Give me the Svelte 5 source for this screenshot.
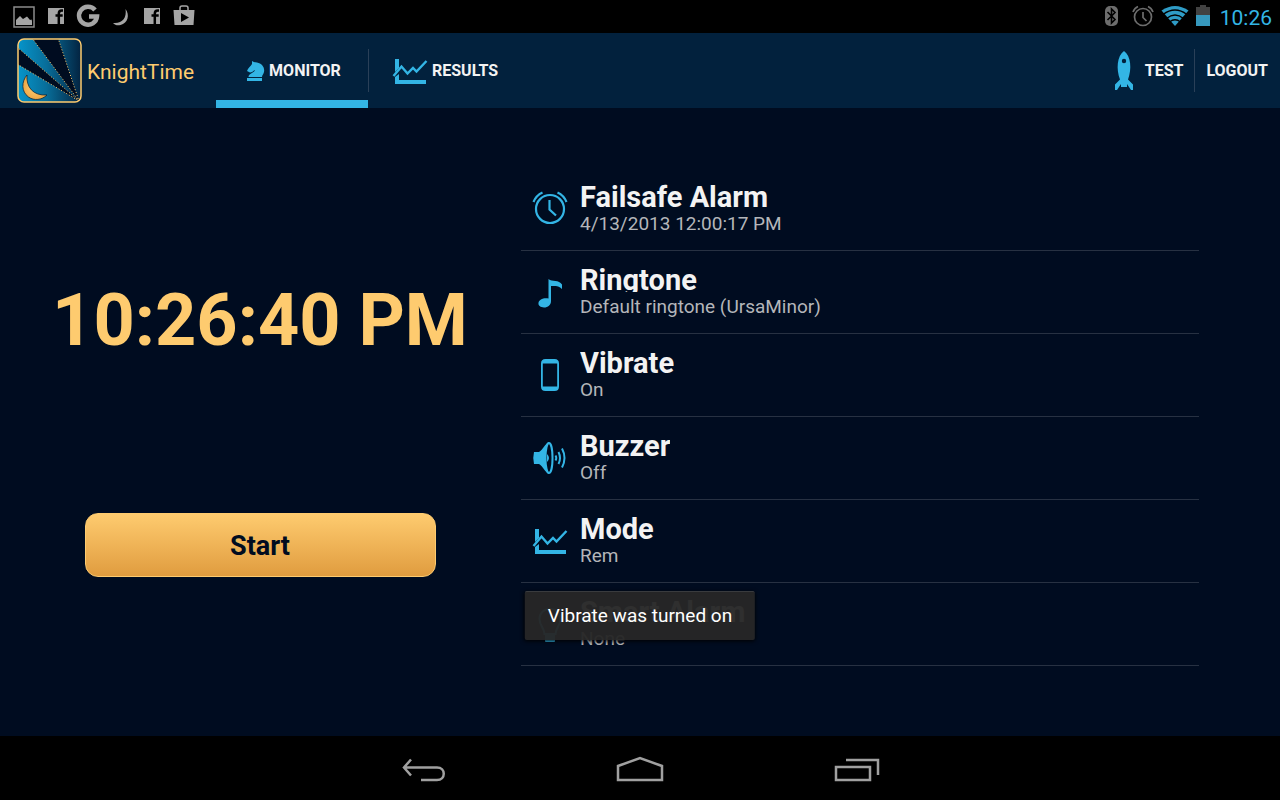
<script lang="ts">
  type Setting = { icon: string; title: string; value: string };

  const settings: Setting[] = [
    { icon: 'alarm', title: 'Failsafe Alarm', value: '4/13/2013 12:00:17 PM' },
    { icon: 'note', title: 'Ringtone', value: 'Default ringtone (UrsaMinor)' },
    { icon: 'phone', title: 'Vibrate', value: 'On' },
    { icon: 'speaker', title: 'Buzzer', value: 'Off' },
    { icon: 'chart', title: 'Mode', value: 'Rem' },
    { icon: 'bulb', title: 'Smart Alarm', value: 'None' }
  ];
</script>

{#snippet chart()}
  <svg width="36" height="28" viewBox="0 0 36 28" aria-hidden="true">
    <path d="M3 2h4v9l-4 4zM3 20l4-3v6h27v4H3z" fill="#33b5e5" />
    <path d="M1.500 19L9.500 9.500l6 7L21 11l3.500 3.500L34.500 4" fill="none" stroke="#33b5e5" stroke-width="2.400" />
  </svg>
{/snippet}

{#snippet facebook()}
  <svg width="32" height="32" viewBox="0 0 32 32" aria-hidden="true">
    <path d="M8 8h16v16H8z" fill="#a5a5a5" />
    <path d="M18.800 24V13.500q0-3 3-3h1.200M15.500 15.600h7.200" fill="none" stroke="#000" stroke-width="2.500" />
  </svg>
{/snippet}

{#snippet rowIcon(name: string)}
  {#if name === 'chart'}
    {@render chart()}
  {:else}
    <svg width="36" height="36" viewBox="0 0 36 36" fill="none" stroke="#33b5e5" aria-hidden="true">
      {#if name === 'alarm'}
        <circle cx="18" cy="18" r="14" stroke-width="2.200" />
        <path d="M17.500 9v9.500l6.500 6" stroke-width="2.200" />
        <path d="M1.500 11Q4 4.500 10.500 1.500M34.500 11Q32 4.500 25.500 1.500" stroke-width="2.200" />
      {:else if name === 'note'}
        <path d="M16.500 5c3.500 3 10.500.5 13.500 5.500v4.500c-3-3.500-7-3-11-3v15c0 4-3 6.500-7 6.500-3.500 0-6-2-5.500-4.700.5-3.200 5-5.300 10-4.300z" fill="#33b5e5" stroke="none" />
      {:else if name === 'phone'}
        <path fill-rule="evenodd" d="M13.500 2h9q4.500 0 4.500 4.500v23q0 4.500-4.500 4.500h-9q-4.500 0-4.500-4.500v-23Q9 2 13.500 2zM10.800 6.500v23h14.400v-23z" fill="#33b5e5" stroke="none" />
      {:else if name === 'speaker'}
        <path d="M2 12h5c4-2 6-8.500 10-10v32c-4-1.500-6-8-10-10H2q-1.500-6 0-12z" fill="#33b5e5" stroke="none" />
        <ellipse cx="17" cy="18" rx="3.500" ry="15" fill="#000c20" stroke-width="2" />
        <path d="M15 14q4 4 0 8z" fill="#33b5e5" stroke="none" />
        <path d="M23.500 15.500q1.500 2.500 0 5M26.500 12q3 6 0 12M30 8.500q5 9.500 0 19" stroke-width="2" />
      {:else}
        <path d="M12.500 28c0-6-5-8-5-15 0-6 4.500-10 10.500-10s10.500 4 10.500 10c0 7-5 9-5 15z" stroke-width="2" />
        <path d="M13 29h10v6.500q-5 3-10 0z" fill="#33b5e5" stroke="none" />
      {/if}
    </svg>
  {/if}
{/snippet}

<div class="screen">
  <div class="status">
    <div class="notices">
      <svg width="32" height="32" viewBox="0 0 32 32" aria-hidden="true">
        <path d="M6 7h20v20H6z" fill="none" stroke="#8c8c8c" stroke-width="1.500" />
        <path d="M8 25v-5l4-4 3 3 4-2.500 3 3.500 1.500-.5L24 21v4z" fill="#a5a5a5" />
      </svg>
      {@render facebook()}
      <svg width="32" height="32" viewBox="0 0 32 32" aria-hidden="true">
        <path d="M23 10A9 9 0 1 0 25 16.500H17" fill="none" stroke="#a5a5a5" stroke-width="4.500" />
      </svg>
      <svg width="32" height="32" viewBox="0 0 32 32" aria-hidden="true">
        <path d="M21.500 9c4.500 6 2.500 14-5 16-3 .7-5.500.2-7.500-2 9 1 14-5 12.500-14z" fill="#a5a5a5" />
      </svg>
      {@render facebook()}
      <svg width="32" height="32" viewBox="0 0 32 32" aria-hidden="true">
        <path d="M12 11V8q0-2 2-2h4q2 0 2 2v3" fill="none" stroke="#a5a5a5" stroke-width="1.500" />
        <path fill-rule="evenodd" d="M5.500 10h21L25.500 25h-19zM13 13v9l8-4.500z" fill="#a5a5a5" />
      </svg>
    </div>
    <div class="indicators">
      <svg width="32" height="32" viewBox="0 0 32 32" aria-hidden="true">
        <rect x="9" y="6" width="13" height="20" rx="5" fill="#6d6d6d" />
        <path d="M11.500 12l7.500 7.500L15.500 23V9l3.500 3.500L11.500 20" fill="none" stroke="#000" stroke-width="1.600" />
      </svg>
      <svg width="32" height="32" viewBox="0 0 32 32" fill="none" stroke="#6d6d6d" stroke-width="1.700" aria-hidden="true">
        <circle cx="15" cy="17" r="8.500" />
        <path d="M15 12v5.500l3.500 3.500M5 12q1.500-4 5-5.500M25 12q-1.500-4-5-5.500" />
      </svg>
      <svg width="32" height="32" viewBox="0 0 32 32" aria-hidden="true">
        <path d="M1.500 10.500Q15 1.500 28.500 10.500L15 26z" fill="#2f9cc6" />
        <path d="M3 14.500Q15 5.500 27 14.500M6.500 18.500Q15 11.500 23.500 18.500M9.500 22Q15 17.500 20.500 22" fill="none" stroke="#000" stroke-width="1.300" />
      </svg>
      <svg width="24" height="32" viewBox="0 0 24 32" aria-hidden="true">
        <path d="M4 7h4V5h6v2h4v8H4z" fill="#424242" />
        <path d="M4 15h14v11H4z" fill="#3698bd" />
      </svg>
      <time class="small-clock">10:26</time>
    </div>
  </div>

  <header>
    <div class="brand">
      <svg width="65" height="65" viewBox="0 0 65 65" aria-hidden="true">
        <defs>
          <linearGradient id="sky"><stop offset="0" stop-color="#0696cc" /><stop offset=".45" stop-color="#086e9a" /><stop offset="1" stop-color="#03213e" /></linearGradient>
          <radialGradient id="gold"><stop offset="0" stop-color="#ffcf78" /><stop offset="1" stop-color="#eda846" /></radialGradient>
          <clipPath id="tile"><rect x="1" y="1" width="63" height="63" rx="6" /></clipPath>
        </defs>
        <g clip-path="url(#tile)">
          <path d="M0 0h65v65H0z" fill="url(#sky)" />
          <path d="M15 0h26l21 63zM0 9l62 54L0 26z" fill="#000c20" />
          <path d="M15 0l47 63L41 0M0 9l62 54L0 26" fill="none" stroke="#fecb6f" stroke-dasharray="1 2" />
        </g>
        <path d="M10 37c-1 12 6 21 20 20-5 5-13 6-18.500 2C4 53.500 4.500 43.500 10 37z" fill="url(#gold)" stroke="#051a30" stroke-width=".7" />
        <rect x="1" y="1" width="63" height="63" rx="6" fill="none" stroke="#fecb6f" stroke-width="1.500" />
      </svg>
      <span>KnightTime</span>
    </div>
    <nav>
      <a class="tab active" href="#monitor">
        <svg width="18" height="20" viewBox="0 0 18 20" aria-hidden="true">
          <path d="M5 0q2 1.500 5 1.500c5 1 8 5 7 9.500-.5 2.500-2 3-2 5H1.500c0-3.500 6-4 6.500-7-2 1-3 2.500-5 2.500L0 10C1 7 3.500 5.500 5 3z M0 17h15v3H0z" fill="#33b5e5" />
        </svg>
        MONITOR
      </a>
      <a class="tab" href="#results">{@render chart()} RESULTS</a>
    </nav>
    <div class="actions">
      <button class="test">
        <svg width="18" height="40" viewBox="0 0 18 40" aria-hidden="true">
          <path fill-rule="evenodd" d="M9 0c7 5 8 18 4 28.500l5 5V39h-2l-4-6v3H6v-3l-4 6H0v-5.500l5-5C1 18 2 5 9 0zM9 7.800a2.200 2.200 0 1 0 0 4.400 2.200 2.200 0 1 0 0-4.400z" fill="#33b5e5" />
        </svg>
        TEST
      </button>
      <button class="logout">LOGOUT</button>
    </div>
  </header>

  <main>
    <section class="clock">
      <time>10:26:40 PM</time>
      <button class="start">Start</button>
    </section>
    <ul>
      {#each settings as item}
        <li>
          <button class="row">
            <span class="icon">{@render rowIcon(item.icon)}</span>
            <span class="copy">
              <span class="title">{item.title}</span>
              <span class="value">{item.value}</span>
            </span>
          </button>
        </li>
      {/each}
    </ul>
  </main>

  <div class="toast" role="status">Vibrate was turned on</div>

  <footer>
    <button aria-label="Back">
      <svg width="48" height="32" viewBox="0 0 48 32">
        <path d="M11 7.500L4 15.500l7 8M4 15.500H37c9 0 9 12.500 0 12.500H21" />
      </svg>
    </button>
    <button aria-label="Home">
      <svg width="48" height="32" viewBox="0 0 48 32">
        <path d="M2 28V14L24 6l22 8v14z" />
      </svg>
    </button>
    <button aria-label="Recent apps">
      <svg width="48" height="32" viewBox="0 0 48 32">
        <path d="M4 15h34v13H4zM14 8h32v15" />
      </svg>
    </button>
  </footer>
</div>

<style>
  :global(body) {
    margin: 0;
    background: #000c20;
  }
  .screen {
    position: relative;
    display: flex;
    flex-direction: column;
    min-height: 100vh;
    background: #000c20;
    color: #f3f3f3;
    font-family: Roboto, "Liberation Sans", sans-serif;
  }
  svg {
    display: block;
    flex: none;
  }
  button {
    margin: 0;
    padding: 0;
    border: 0;
    background: none;
    color: inherit;
    font: inherit;
    cursor: pointer;
  }
  .status {
    display: flex;
    justify-content: space-between;
    height: 33px;
    padding: 0 8px;
    background: #000;
  }
  .notices,
  .indicators {
    display: flex;
  }
  .small-clock {
    padding-left: 4px;
    color: #33b5e5;
    font-size: 21px;
    line-height: 36px;
  }
  header {
    display: flex;
    height: 75px;
    background: #02213d;
    font-size: 16px;
    font-weight: 700;
  }
  .brand {
    display: flex;
    align-items: center;
    gap: 5px;
    box-sizing: border-box;
    width: 216px;
    padding-left: 17px;
    color: #fecb6f;
    font-size: 21px;
    font-weight: 400;
  }
  .brand span {
    line-height: 24px;
    padding-top: 2px;
  }
  nav {
    display: flex;
  }
  .tab {
    position: relative;
    display: flex;
    align-items: center;
    justify-content: center;
    gap: 4px;
    box-sizing: border-box;
    min-width: 152px;
    padding: 0 24px;
    border-top: 8px solid transparent;
    border-bottom: 8px solid transparent;
    color: inherit;
    text-decoration: none;
  }
  .tab.active {
    padding: 0 24px 0 28px;
    border-bottom-color: #33b5e5;
  }
  .tab + .tab::before,
  .logout::before {
    content: "";
    position: absolute;
    left: 0;
    top: 16px;
    bottom: 16px;
    width: 1px;
    background: #2a4058;
  }
  .tab + .tab::before {
    top: 8px;
    bottom: 8px;
  }
  .actions {
    display: flex;
    margin-left: auto;
  }
  .test {
    display: flex;
    align-items: center;
    gap: 12px;
    padding-right: 11px;
  }
  .logout {
    position: relative;
    padding: 0 12px;
  }
  main {
    flex: 1;
    display: grid;
    grid-template-columns: 13fr 17fr;
    align-items: start;
    padding: 60px 80px 60px 0;
  }
  .clock {
    display: flex;
    flex-direction: column;
    align-items: center;
    padding-top: 109px;
  }
  .clock time {
    color: #fecb6f;
    font-size: 72px;
    font-weight: 700;
    line-height: 88px;
    white-space: nowrap;
  }
  .start {
    box-sizing: border-box;
    width: 67.5%;
    height: 64px;
    margin-top: 148px;
    padding-top: 2px;
    border: 1px solid #fecb6f;
    border-radius: 13px;
    background: linear-gradient(#fecb6f, #e09c3f);
    color: #000c20;
    font-size: 27px;
    font-weight: 700;
  }
  ul {
    margin: 0 1px;
    padding: 0;
    list-style: none;
  }
  li {
    border-bottom: 1px solid #273142;
  }
  .row {
    display: flex;
    gap: 1px;
    width: 100%;
    height: 82px;
    text-align: left;
  }
  .icon {
    display: grid;
    place-items: center;
    width: 58px;
    height: 82px;
  }
  .copy {
    display: flex;
    flex-direction: column;
    padding-top: 11px;
  }
  .title {
    height: 30px;
    overflow: hidden;
    font-size: 29px;
    font-weight: 700;
    line-height: 36px;
  }
  .value {
    color: #b4b6ba;
    font-size: 19px;
    line-height: 30px;
  }
  .toast {
    position: absolute;
    left: 50%;
    bottom: 160px;
    transform: translateX(-50%);
    box-sizing: border-box;
    padding: 0 23px;
    border-top: 1px solid #393b3e;
    border-radius: 2px;
    background: rgba(39, 39, 39, 0.96);
    box-shadow: 0 1px 4px #000;
    color: #fff;
    font-size: 19px;
    line-height: 48px;
    white-space: nowrap;
  }
  footer {
    display: flex;
    align-items: center;
    justify-content: center;
    gap: 168px;
    height: 64px;
    background: #000;
  }
  footer svg {
    fill: none;
    stroke: #a0a0a0;
    stroke-width: 2.5;
  }
</style>
